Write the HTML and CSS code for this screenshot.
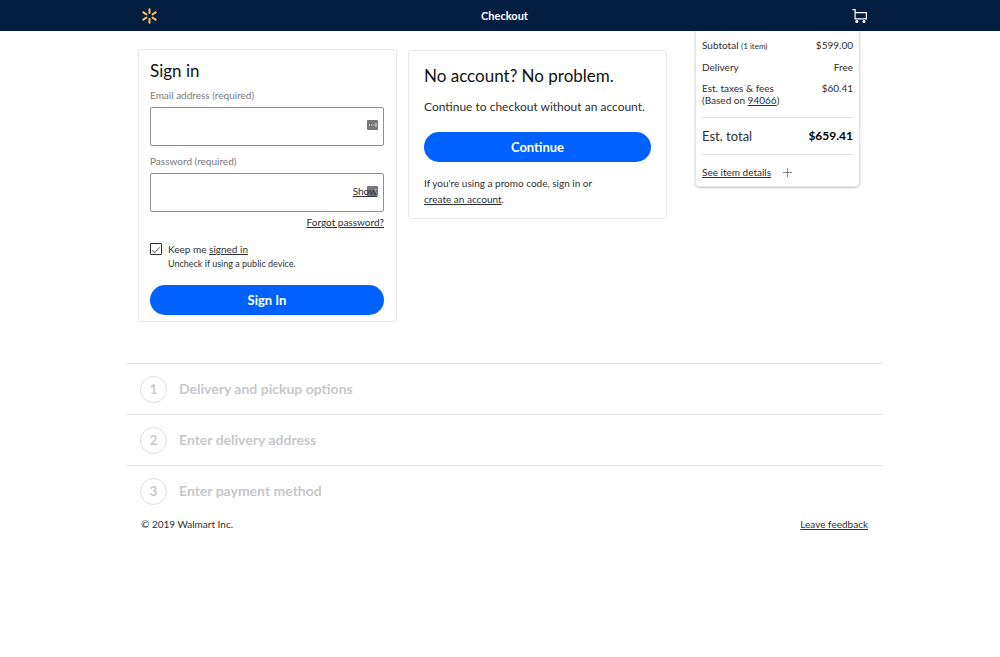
FILE: index.html
```html
<!DOCTYPE html>
<html lang="en">
<head>
<meta charset="utf-8">
<meta name="viewport" content="width=device-width, initial-scale=1">
<title>Checkout</title>
<link rel="stylesheet" href="styles.css">
</head>
<body>
<header class="topbar">
  <a class="topbar-link" href="#" aria-label="Walmart home">
    <svg width="17" height="16" viewBox="0 0 17 16" fill="none" stroke="#fbc55c" stroke-width="2.1" stroke-linecap="round">
      <path d="M8.5 1.3v3.7M8.5 11v3.7M2.3 4.4l3.2 1.9M11.5 9.7l3.2 1.9M14.7 4.4l-3.2 1.9M5.5 9.7l-3.2 1.9"/>
    </svg>
  </a>
  <h1 class="topbar-title">Checkout</h1>
  <a class="topbar-link" href="#" aria-label="Cart">
    <svg width="16" height="16" viewBox="0 0 16 16" fill="none" stroke="#fff" stroke-width="1.2">
      <path d="M.5 1.6h2.6v9.3h11.3V4.6H3.1"/>
      <circle cx="4.8" cy="13.6" r="1.5" fill="#fff" stroke="none"/>
      <circle cx="12" cy="13.6" r="1.5" fill="#fff" stroke="none"/>
    </svg>
  </a>
</header>
<main class="checkout">
  <div class="overview">
    <form class="card signin">
      <h2 class="signin-title">Sign in</h2>
      <label class="label" for="email">Email address (required)</label>
      <div class="field">
        <input class="input" id="email" type="email">
        <svg class="manager" width="11" height="10" viewBox="0 0 11 10">
          <rect width="11" height="10" rx="1" fill="#77777b"/>
          <path d="M2 4.5h1v1H2zM4.2 4.5h1v1h-1zM6.4 4.5h1v1h-1zM8.6 3h.8v4h-.8z" fill="#fff"/>
        </svg>
      </div>
      <label class="label label-next" for="password">Password (required)</label>
      <div class="field">
        <input class="input" id="password" type="password">
        <svg class="manager" width="11" height="10" viewBox="0 0 11 10">
          <rect width="11" height="10" rx="1" fill="#77777b"/>
          <path d="M8.6 3h.8v4h-.8z" fill="#fff"/>
        </svg>
        <button class="show" type="button">Show</button>
      </div>
      <a class="forgot" href="#">Forgot password?</a>
      <div class="keep">
        <input class="check" id="keep" type="checkbox" checked>
        <label for="keep">Keep me <u>signed in</u></label>
        <small class="hint">Uncheck if using a public device.</small>
      </div>
      <button class="button" type="submit">Sign In</button>
    </form>
    <section class="card guest">
      <h2 class="guest-title">No account? No problem.</h2>
      <p class="guest-text">Continue to checkout without an account.</p>
      <button class="button" type="button">Continue</button>
      <p class="promo">If you're using a promo code, sign in or<br><a href="#">create an account</a>.</p>
    </section>
    <aside class="summary">
      <dl class="costs">
        <div class="cost"><dt>Subtotal <small class="count">(1 item)</small></dt><dd>$599.00</dd></div>
        <div class="cost"><dt>Delivery</dt><dd>Free</dd></div>
        <div class="cost"><dt>Est. taxes &amp; fees<br>(Based on <a href="#">94066</a>)</dt><dd>$60.41</dd></div>
        <div class="cost total"><dt>Est. total</dt><dd>$659.41</dd></div>
      </dl>
      <button class="details" type="button"><u>See item details</u>
        <svg width="9" height="9" viewBox="0 0 9 9" stroke="#888" stroke-width="1"><path d="M4.5 0v9M0 4.5h9"/></svg>
      </button>
    </aside>
  </div>
  <ol class="steps">
    <li class="step"><span class="number">1</span>Delivery and pickup options</li>
    <li class="step"><span class="number">2</span>Enter delivery address</li>
    <li class="step"><span class="number">3</span>Enter payment method</li>
  </ol>
  <footer class="footer">
    <span>© 2019 Walmart Inc.</span>
    <a href="#">Leave feedback</a>
  </footer>
</main>
</body>
</html>
```

FILE: styles.css
```css
* { box-sizing: border-box; }
body {
  margin: 0;
  background: #fff;
  color: #2e2f32;
  font: 10px/16px Lato, "Liberation Sans", sans-serif;
}
h1, h2, p, dl, dd, ol { margin: 0; padding: 0; font-weight: 400; }
a { color: inherit; }
button, input { font: inherit; color: inherit; }

.topbar {
  display: grid;
  grid-template-columns: 1fr auto 1fr;
  align-items: center;
  height: 31px;
  padding: 0 132px 0 141px;
  background: #041e42;
  color: #fff;
}
.topbar-link { display: flex; }
.topbar-link:last-child { justify-self: end; }
.topbar-title { font-size: 11px; font-weight: 700; }

.checkout { padding: 0 117px 0 126px; }
.overview {
  display: grid;
  grid-template-columns: 259fr 298fr 165px;
  align-items: start;
  padding: 0 23px 0 12px;
}
.card { border: 1px solid #e8e8e8; border-radius: 3px; }

.signin {
  display: flex;
  flex-direction: column;
  margin-top: 18px;
  padding: 9px 12px 6px 11px;
}
.signin-title { font-size: 17px; line-height: 24px; color: #111; }
.label { margin: 4px 0; color: #77777b; }
.label-next { margin-top: 7px; }
.field { position: relative; display: flex; }
.input {
  width: 100%;
  height: 39px;
  padding: 0 48px 0 10px;
  border: 1px solid #909196;
  border-radius: 2px;
  background: #fff;
}
.manager { position: absolute; right: 6px; top: 13px; }
.show {
  position: absolute;
  right: 7px;
  top: 10px;
  padding: 0;
  border: 0;
  background: none;
  text-decoration: underline;
}
.forgot { align-self: flex-end; margin-top: 2px; }
.keep {
  display: grid;
  grid-template-columns: 12px 1fr;
  column-gap: 6px;
  align-items: center;
  margin: 11px 0 14px;
}
.check {
  appearance: none;
  width: 12px;
  height: 12px;
  margin: 0;
  border: 1px solid #2e2f32;
  border-radius: 1px;
  background: #fff;
}
.check:checked::after {
  content: "";
  display: block;
  width: 7px;
  height: 3px;
  margin: 3px 1px;
  border: solid #77777b;
  border-width: 0 0 1px 1px;
  transform: rotate(-45deg);
}
.hint { grid-column: 2; font-size: 9px; line-height: 14px; }
.button {
  width: 100%;
  height: 30px;
  padding: 0;
  border: 0;
  border-radius: 15px;
  background: #0061fe;
  color: #fff;
  font-size: 13px;
  font-weight: 700;
}

.guest { margin: 19px 28px 0 11px; padding: 12px 15px 11px; }
.guest-title { font-size: 17px; line-height: 26px; color: #111; }
.guest-text { margin: 10px 0 17px; font-size: 12px; }
.promo { margin-top: 13px; }

.summary {
  padding: 8px 6px 6px;
  border: 1px solid #e3e4e5;
  border-top: 0;
  border-radius: 0 0 5px 5px;
  box-shadow: 0 1px 2px #00000040;
}
.cost {
  display: flex;
  justify-content: space-between;
  margin-bottom: 9px;
  line-height: 12px;
}
.count { font-size: 8px; }
.total {
  align-items: center;
  margin: 11px 0 9px;
  padding: 10px 0;
  border: solid #e3e4e5;
  border-width: 1px 0;
  font-size: 13px;
  line-height: 16px;
}
.total dd { color: #000; font-size: 12px; font-weight: 700; }
.details {
  display: flex;
  align-items: center;
  gap: 12px;
  padding: 0;
  border: 0;
  background: none;
}

.steps { margin-top: 41px; list-style: none; }
.step {
  display: flex;
  align-items: center;
  gap: 12px;
  height: 51px;
  padding-left: 14px;
  border-top: 1px solid #e3e4e5;
  color: #c7c8cb;
  font-size: 14px;
  font-weight: 700;
}
.number {
  display: grid;
  place-items: center;
  width: 27px;
  height: 27px;
  border: 1px solid #dcdde0;
  border-radius: 50%;
  font-size: 13px;
}
.footer {
  display: flex;
  justify-content: space-between;
  padding: 0 15px;
}
```
